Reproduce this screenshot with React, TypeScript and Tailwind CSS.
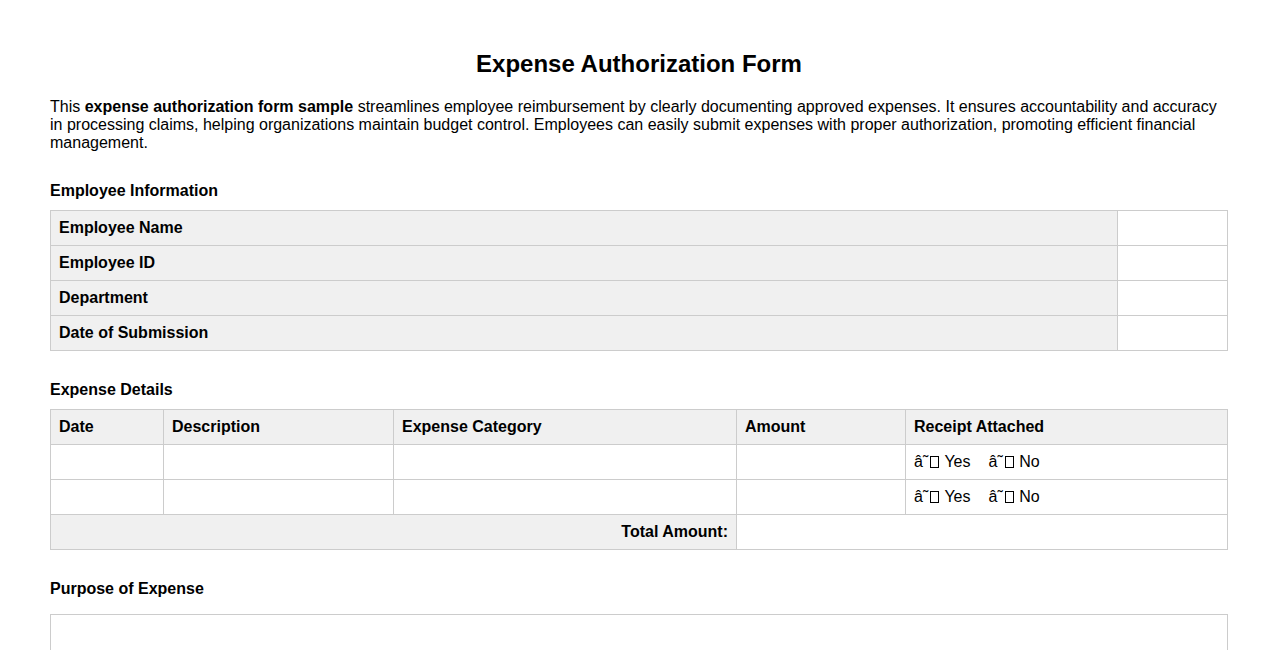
export default function App() {
  const Box = () => (
    <span className="inline-block w-[9px] h-[12px] border border-black align-[-1px] ml-[2px] mr-[1px]" />
  );
  const Receipt = () => (
    <span>
      â˜<Box /> Yes<span className="inline-block w-[18px]" />â˜<Box /> No
    </span>
  );
  const td = "border border-[#cccccc] px-[8px] h-[35px] p-0";
  return (
    <div className="bg-white text-black px-[50px] pt-[50px] pb-10 text-[16px] leading-[18px]" style={{ fontFamily: "Arial, 'Liberation Sans', sans-serif" }}>
      <h1 className="text-center text-[24px] leading-[28px] font-bold">Expense Authorization Form</h1>
      <p className="mt-[20px]">
        This <b>expense authorization form sample</b> streamlines employee reimbursement by clearly documenting approved expenses. It ensures accountability and accuracy in processing claims, helping organizations maintain budget control. Employees can easily submit expenses with proper authorization, promoting efficient financial management.
      </p>
      <h2 className="font-bold mt-[30px]">Employee Information</h2>
      <table className="w-full border-collapse mt-[10px]">
        <tbody>
          {["Employee Name", "Employee ID", "Department", "Date of Submission"].map((l) => (
            <tr key={l}>
              <td className={`${td} bg-[#f0f0f0] font-bold`}>{l}</td>
              <td className={`${td} w-[110px]`}></td>
            </tr>
          ))}
        </tbody>
      </table>
      <h2 className="font-bold mt-[30px]">Expense Details</h2>
      <table className="w-full border-collapse mt-[10px] table-fixed">
        <thead>
          <tr className="bg-[#f0f0f0] font-bold text-left">
            <th className={`${td} w-[113px] text-left`}>Date</th>
            <th className={`${td} w-[230px] text-left`}>Description</th>
            <th className={`${td} w-[343px] text-left`}>Expense Category</th>
            <th className={`${td} w-[169px] text-left`}>Amount</th>
            <th className={`${td} text-left`}>Receipt Attached</th>
          </tr>
        </thead>
        <tbody>
          {[0, 1].map((i) => (
            <tr key={i}>
              <td className={td}></td>
              <td className={td}></td>
              <td className={td}></td>
              <td className={td}></td>
              <td className={td}><Receipt /></td>
            </tr>
          ))}
          <tr>
            <td colSpan={3} className={`${td} bg-[#f0f0f0] font-bold text-right`}>Total Amount:</td>
            <td colSpan={2} className={td}></td>
          </tr>
        </tbody>
      </table>
      <h2 className="font-bold mt-[30px]">Purpose of Expense</h2>
      <div className="mt-[16px] border border-[#cccccc] h-[100px]"></div>
    </div>
  );
}
